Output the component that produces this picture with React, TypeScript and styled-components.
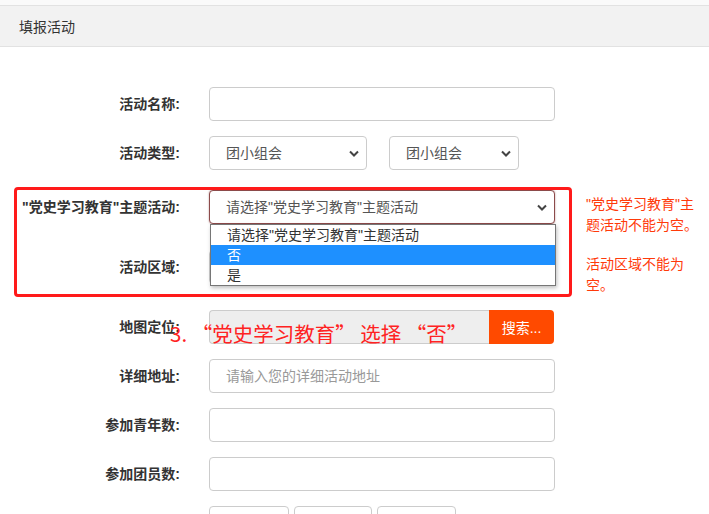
import React from 'react';
import styled, { createGlobalStyle } from 'styled-components';

const GlobalStyle = createGlobalStyle`
  html, body {
    margin: 0;
    padding: 0;
    background: #fff;
  }
  body {
    font-family: "Liberation Sans", "Noto Sans CJK SC", sans-serif;
    font-size: 14px;
    color: #333;
  }
`;

const Page = styled('div')`
  position: relative;
  width: 709px;
  height: 514px;
  overflow: hidden;
  background: #fff;
`;

const TopStrip = styled('div')`
  height: 5px;
  background: #fafafa;
  border-bottom: 1px solid #e2e2e2;
`;

const Header = styled('div')`
  height: 40px;
  display: flex;
  align-items: center;
  padding-left: 19px;
  background: #f2f2f2;
  border-bottom: 1px solid #e2e2e2;
  font-size: 14px;
  color: #333;
`;

const Form = styled('div')`
  position: relative;
  padding-top: 40px;
`;

const Row = styled('div')<{ $mb?: number }>`
  display: flex;
  align-items: flex-start;
  height: 34px;
  margin-bottom: ${(p) => (p.$mb ?? 15)}px;
`;

const Label = styled('div')`
  width: 180px;
  flex-shrink: 0;
  text-align: right;
  line-height: 34px;
  font-size: 14px;
  font-weight: bold;
  color: #333;
  white-space: nowrap;
`;

const Controls = styled('div')`
  position: relative;
  display: flex;
  gap: 22px;
  margin-left: 29px;
`;

const TextInput = styled('input')<{ $w?: number }>`
  box-sizing: border-box;
  width: ${(p) => p.$w ?? 346}px;
  height: 34px;
  border: 1px solid #ccc;
  border-radius: 4px;
  padding: 0 16px;
  font-family: inherit;
  font-size: 14px;
  color: #555;
  background: #fff;
  outline: none;

  &::placeholder {
    color: #999;
  }
`;

const SelectWrap = styled('div')<{ $w: number; $focus?: boolean }>`
  position: relative;
  box-sizing: border-box;
  width: ${(p) => p.$w}px;
  height: 34px;
  border: 1px solid ${(p) => (p.$focus ? '#8c4a4a' : '#ccc')};
  border-radius: 4px;
  background: #fff;
  box-shadow: ${(p) => (p.$focus ? '0 0 2px rgba(120,40,40,0.5)' : 'none')};
`;

const SelectText = styled('div')`
  line-height: 32px;
  padding-left: 16px;
  font-size: 14px;
  color: #555;
  white-space: nowrap;
`;

const Chevron = styled('svg')`
  position: absolute;
  right: 7px;
  top: 13px;
`;

const DropList = styled('div')`
  position: absolute;
  left: 0;
  top: 33px;
  box-sizing: border-box;
  width: 346px;
  border: 1px solid #767676;
  background: #fff;
  box-shadow: 1px 2px 4px rgba(0, 0, 0, 0.25);
  z-index: 3;
`;

const Option = styled('div')<{ $active?: boolean }>`
  height: 20px;
  line-height: 20px;
  padding-left: 16px;
  font-size: 14px;
  color: ${(p) => (p.$active ? '#fff' : '#333')};
  background: ${(p) => (p.$active ? '#1e90ff' : 'transparent')};
`;

const ErrorMsg = styled('div')`
  width: 114px;
  margin-left: 31px;
  padding-top: 4px;
  font-size: 14px;
  line-height: 21px;
  color: #ff3a0a;
`;

const MapGroup = styled('div')`
  display: flex;
  height: 34px;
`;

const MapInput = styled('div')`
  box-sizing: border-box;
  width: 280px;
  height: 34px;
  background: #eee;
  border: 1px solid #ccc;
  border-right: none;
  border-radius: 4px 0 0 4px;
`;

const SearchButton = styled('button')`
  width: 65px;
  height: 34px;
  border: none;
  border-radius: 0 4px 4px 0;
  background: #ff4a00;
  color: #fff;
  font-family: inherit;
  font-size: 14px;
  padding: 0;
`;

const SmallGroup = styled('div')`
  display: flex;
  gap: 5px;
`;

const RedFrame = styled('div')`
  position: absolute;
  left: 14px;
  top: 140px;
  width: 558px;
  height: 110px;
  box-sizing: border-box;
  border: 3px solid #ff1a1a;
  border-radius: 4px;
  pointer-events: none;
  z-index: 2;
`;

const Annotation = styled('div')`
  position: absolute;
  left: 170px;
  top: 272px;
  font-family: "Noto Sans CJK SC", sans-serif;
  font-size: 20.5px;
  line-height: 28px;
  color: #ff2222;
  white-space: pre;
  z-index: 4;
`;

const ChevronIcon = () => (
  <Chevron width="10" height="7" viewBox="0 0 10 7">
    <path d="M1 1.5 L5 5.5 L9 1.5" fill="none" stroke="#444" strokeWidth="2" />
  </Chevron>
);

const Select: React.FC<{ w: number; text: string; focus?: boolean; children?: React.ReactNode }> = ({
  w,
  text,
  focus,
  children,
}) => (
  <SelectWrap $w={w} $focus={focus}>
    <SelectText>{text}</SelectText>
    <ChevronIcon />
    {children}
  </SelectWrap>
);

const App: React.FC = () => {
  return (
    <Page>
      <GlobalStyle />
      <TopStrip />
      <Header>填报活动</Header>
      <Form>
        <Row>
          <Label>活动名称:</Label>
          <Controls>
            <TextInput />
          </Controls>
        </Row>
        <Row $mb={20}>
          <Label>活动类型:</Label>
          <Controls>
            <Select w={158} text="团小组会" />
            <Select w={130} text="团小组会" />
          </Controls>
        </Row>
        <Row $mb={26}>
          <Label>"党史学习教育"主题活动:</Label>
          <Controls>
            <Select w={346} text={'请选择"党史学习教育"主题活动'} focus>
              <DropList>
                <Option>请选择"党史学习教育"主题活动</Option>
                <Option $active>否</Option>
                <Option>是</Option>
              </DropList>
            </Select>
          </Controls>
          <ErrorMsg>"党史学习教育"主题活动不能为空。</ErrorMsg>
        </Row>
        <Row $mb={26}>
          <Label>活动区域:</Label>
          <Controls>
            <Select w={346} text="" />
          </Controls>
          <ErrorMsg>活动区域不能为空。</ErrorMsg>
        </Row>
        <Row>
          <Label>地图定位:</Label>
          <Controls>
            <MapGroup>
              <MapInput />
              <SearchButton>搜索...</SearchButton>
            </MapGroup>
          </Controls>
        </Row>
        <Row>
          <Label>详细地址:</Label>
          <Controls>
            <TextInput placeholder="请输入您的详细活动地址" />
          </Controls>
        </Row>
        <Row>
          <Label>参加青年数:</Label>
          <Controls>
            <TextInput />
          </Controls>
        </Row>
        <Row>
          <Label>参加团员数:</Label>
          <Controls>
            <TextInput />
          </Controls>
        </Row>
        <Row>
          <Label />
          <Controls>
            <SmallGroup>
              <TextInput $w={80} />
              <TextInput $w={78} />
              <TextInput $w={79} />
            </SmallGroup>
          </Controls>
        </Row>
        <RedFrame />
        <Annotation>{'3. “党史学习教育” 选择 “否”'}</Annotation>
      </Form>
    </Page>
  );
};

export default App;
